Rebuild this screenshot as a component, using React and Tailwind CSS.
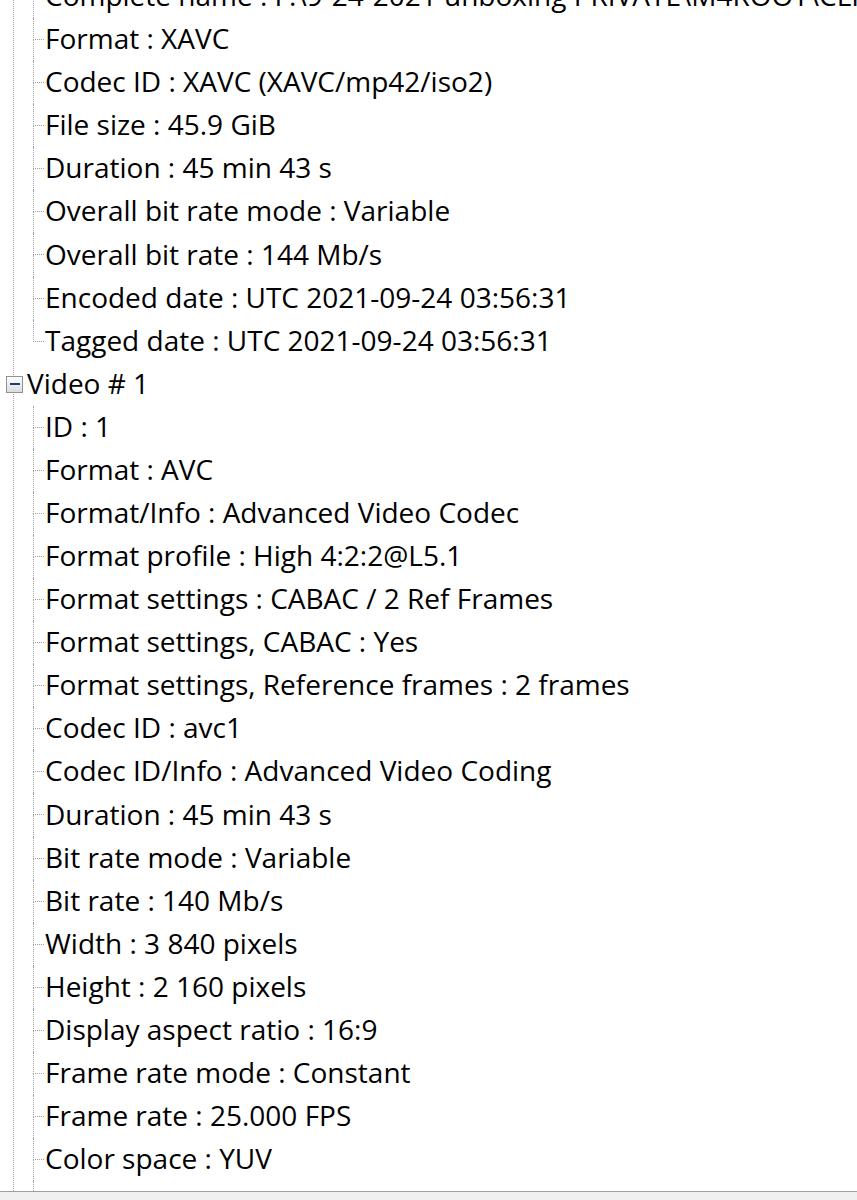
import React from 'react';

// MediaInfo-style tree view of a clip's streams
const generalFields = [
  'Complete name : F:\\9-24-2021 unboxing PRIVATE\\M4ROOT\\CLIP\\C0001.MP4',
  'Format : XAVC',
  'Codec ID : XAVC (XAVC/mp42/iso2)',
  'File size : 45.9 GiB',
  'Duration : 45 min 43 s',
  'Overall bit rate mode : Variable',
  'Overall bit rate : 144 Mb/s',
  'Encoded date : UTC 2021-09-24 03:56:31',
  'Tagged date : UTC 2021-09-24 03:56:31',
];

const videoFields = [
  'ID : 1',
  'Format : AVC',
  'Format/Info : Advanced Video Codec',
  'Format profile : High 4:2:2@L5.1',
  'Format settings : CABAC / 2 Ref Frames',
  'Format settings, CABAC : Yes',
  'Format settings, Reference frames : 2 frames',
  'Codec ID : avc1',
  'Codec ID/Info : Advanced Video Coding',
  'Duration : 45 min 43 s',
  'Bit rate mode : Variable',
  'Bit rate : 140 Mb/s',
  'Width : 3 840 pixels',
  'Height : 2 160 pixels',
  'Display aspect ratio : 16:9',
  'Frame rate mode : Constant',
  'Frame rate : 25.000 FPS',
  'Color space : YUV',
  'Chroma subsampling : 4:2:2',
  'Bit depth : 8 bits',
];

function LeafRow({ text, last }) {
  return (
    <div className="flex h-[43.08px]">
      <div className="flex w-[11px] shrink-0 flex-col">
        <div className="h-[22px] border-b border-l border-dotted border-[#a0a0a0]" />
        <div className={`flex-1 ${last ? '' : 'border-l border-dotted border-[#a0a0a0]'}`} />
      </div>
      <div className="flex items-center whitespace-nowrap pl-[1px] pb-[3px]">{text}</div>
    </div>
  );
}

function Children({ items }) {
  return (
    <div className="pl-[19px]">
      {items.map((t, i) => (
        <LeafRow key={t} text={t} last={i === items.length - 1} />
      ))}
    </div>
  );
}

function MinusBox() {
  return (
    <div className="relative flex h-[17px] w-[17px] shrink-0 items-center justify-center border border-[#919191] bg-gradient-to-b from-white to-[#dcdcdc]">
      <div className="h-[2px] w-[10px] bg-[#1e3c78]" />
    </div>
  );
}

export default function App() {
  return (
    <div className="flex h-[1200px] w-[857px] flex-col bg-white text-black">
      <div className="h-[1192px] overflow-hidden border-b border-[#a0a0a0]">
        <div
          className="-mt-[25px] ml-[13px] border-l border-dotted border-[#a0a0a0] text-[28px]"
          style={{ fontFamily: '"Open Sans", "Noto Sans", sans-serif' }}
        >
          <Children items={generalFields} />
          <div className="-ml-[8px] flex h-[43.08px] items-center">
            <MinusBox />
            <span className="ml-[4px] whitespace-nowrap pb-[3px]">Video # 1</span>
          </div>
          <Children items={videoFields} />
        </div>
      </div>
      <div className="flex-1 bg-[#f0f0f0]" />
    </div>
  );
}
